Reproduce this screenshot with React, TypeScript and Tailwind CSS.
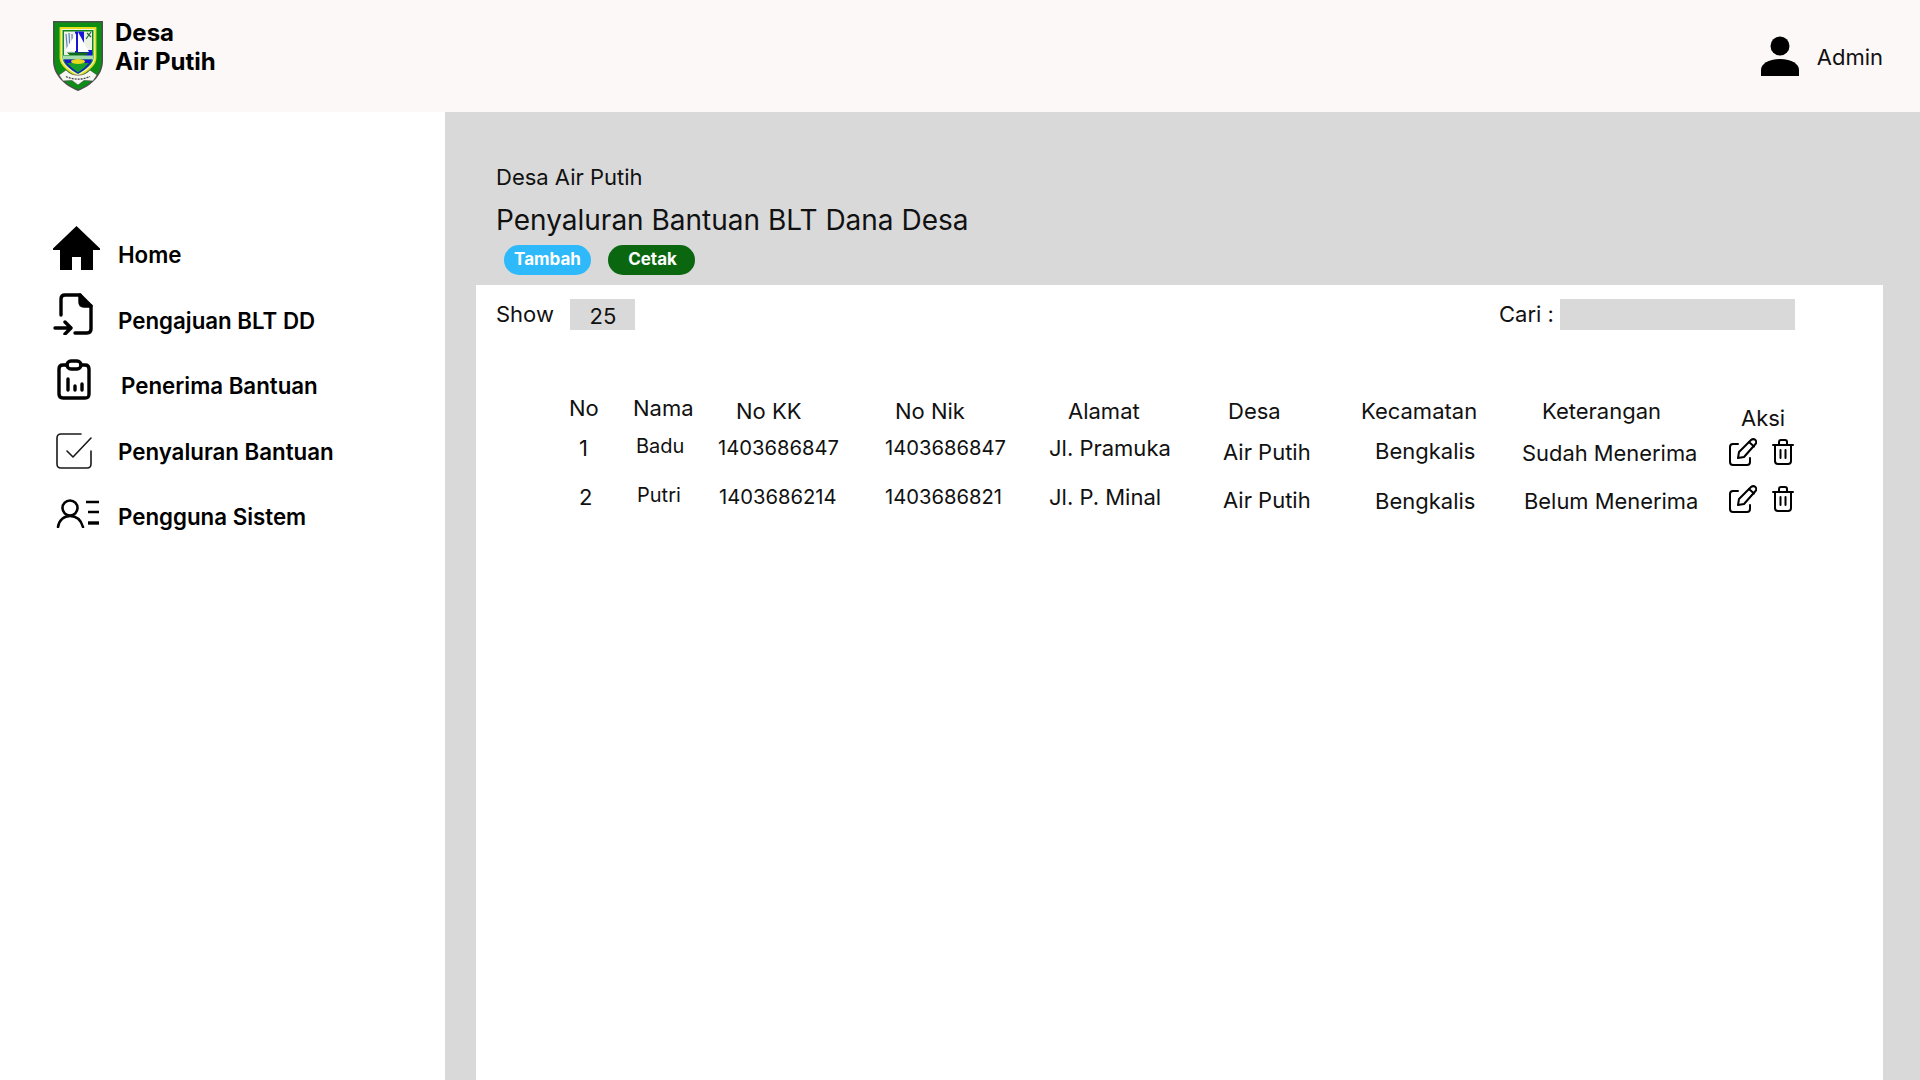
const Logo = () => (
  <svg width="50" height="70" viewBox="0 0 50 70" className="shrink-0">
    <path d="M0 0H50V40C50 54 38 65 25 70C12 65 0 54 0 40Z" fill="#4a4f4a" />
    <path d="M1.500 1.500H48.500V40C48.500 53 37 63.500 25 68.500C13 63.500 1.500 53 1.500 40Z" fill="#0a8f14" />
    <path d="M7.500 7H42.500V37C42.500 44 33 51 25 55.500C17 51 7.500 44 7.500 37Z" fill="#f3f6e6" stroke="#e6de1c" strokeWidth="1.800" />
    <path d="M9.500 9H40.500V37C40.500 43 32 49 25 53C18 49 9.500 43 9.500 37Z" fill="#0c8a18" />
    <path d="M11 10.500H39V34H11Z" fill="#eef2e4" />
    <path d="M22 10.500H31V34H22Z" fill="#1616d6" />
    <path d="M31 29H39V35H31Z" fill="#1616d6" />
    <path d="M13 13L14.500 30M16 12L17 30M19 13L19.500 28" stroke="#5f82c0" strokeWidth="1.200" />
    <path d="M34 12L38 16M38 11L33 18" stroke="#1f6b3a" strokeWidth="1.200" />
    <path d="M12 30L23 12V30Z" fill="#fff" />
    <path d="M25 11L36 31H25Z" fill="#fff" />
    <path d="M14 31.500H36L33 34.500H17Z" fill="#0f6a1c" />
    <path d="M10 34.500H40V38.500H10Z" fill="#a4dcae" />
    <path d="M11 38.500H39C38 43 32 49 25 52.500C18 49 12 43 11 38.500Z" fill="#1717d0" />
    <path d="M14 42H36L31 47L25 51.500L19 47Z" fill="#18a02a" />
    <ellipse cx="25" cy="40.500" rx="7" ry="2.500" fill="#e9d91e" />
    <path d="M6 54L13 49C19 56 31 56 37 49L44 54L40 60L31 59.500L25 64L19 59.500L10 60Z" fill="#f7f7f2" stroke="#444" strokeWidth="0.600" />
    <path d="M13 55.500C20 59 30 59 37 55.500" fill="none" stroke="#444" strokeWidth="1.300" strokeDasharray="2 1" />
  </svg>
);

const HomeIcon = () => (
  <svg width="47" height="44" viewBox="0 0 47 44">
    <path d="M23.500 0L47 22.500V24H40V44H28V31H19V44H7V24H0V22.500Z" fill="#000" />
  </svg>
);

const FileIcon = () => (
  <svg width="41" height="42" viewBox="0 0 41 42" fill="none" stroke="#000" strokeWidth="3.400" strokeLinecap="round" strokeLinejoin="round">
    <path d="M8 22V6C8 3 10 2 12 2H27L38 13V36C38 39 36 40 34 40H22" />
    <path d="M27 2V9C27 11 28 13 31 13H38" fill="#000" />
    <path d="M2 35H17M12 29L18 35L12 41" />
  </svg>
);

const ClipboardIcon = () => (
  <svg width="34" height="41" viewBox="0 0 34 41" fill="none" stroke="#000" strokeWidth="3.400" strokeLinecap="round">
    <path d="M10 6H6C3 6 2 8 2 10V35C2 38 4 39 6 39H28C31 39 32 38 32 35V10C32 8 31 6 28 6H24" />
    <rect x="10" y="2" width="14" height="8" rx="4" />
    <path d="M11 20V31M18 27V31M25 25V31" />
  </svg>
);

const CheckIcon = () => (
  <svg width="36" height="36" viewBox="0 0 36 36" fill="none" stroke="#1a1a1a" strokeWidth="1.600" strokeLinecap="round" strokeLinejoin="round">
    <path d="M25 1H5C2.500 1 1 2.500 1 5V31C1 33.500 2.500 35 5 35H31C33.500 35 35 33.500 35 31V18" />
    <path d="M11 18L17 24L35 5" />
  </svg>
);

const UserListIcon = () => (
  <svg width="44" height="29" viewBox="0 0 44 29" fill="none" stroke="#000" strokeWidth="2.600" strokeLinecap="round">
    <circle cx="14" cy="9" r="7.500" />
    <path d="M2 28C3 21 8 17 14 17C20 17 25 21 27 28" />
    <path d="M30 3H43M32 13H43" strokeLinecap="butt" />
    <path d="M32 24H43" strokeWidth="3.400" strokeLinecap="butt" />
  </svg>
);

const EditIcon = () => (
  <svg width="28" height="28" viewBox="0 0 28 28" fill="none" stroke="#000" strokeWidth="2" strokeLinecap="round" strokeLinejoin="round">
    <path d="M9 6H4C2 6 1 7.500 1 9V24C1 26 2 27 4 27H18C20 27 21 26 21 24V20" />
    <path d="M9 20L10 14L22 2C23.500 0.800 25 0.800 26.500 2C27.500 3.500 27.500 5 26.500 6L15 19Z" />
    <path d="M20 4L25 8.500" />
  </svg>
);

const TrashIcon = () => (
  <svg width="22" height="26" viewBox="0 0 22 26" fill="none" stroke="#000" strokeWidth="2" strokeLinecap="round" strokeLinejoin="round">
    <path d="M1 6H21" />
    <path d="M7 6V3C7 2 8 1 9 1H13C14 1 15 2 15 3V6" />
    <path d="M3 6V22C3 24 4 25 6 25H16C18 25 19 24 19 22V6" />
    <path d="M8.500 11V19M13.500 11V19" />
  </svg>
);

const menu = [
  { label: 'Home', icon: <div className="pb-[13px]"><HomeIcon /></div>, text: '' },
  { label: 'Pengajuan BLT DD', icon: <div className="pb-[12px]"><FileIcon /></div>, text: '' },
  { label: 'Penerima Bantuan', icon: <div className="pb-[12px] pl-1"><ClipboardIcon /></div>, text: 'pl-[3px]' },
  { label: 'Penyaluran Bantuan', icon: <div className="pl-[3px]"><CheckIcon /></div>, text: '' },
  { label: 'Pengguna Sistem', icon: <div className="pb-[6px] pl-[3px]"><UserListIcon /></div>, text: '' },
];

const Actions = () => (
  <div className="flex items-center gap-[15px]">
    <EditIcon />
    <TrashIcon />
  </div>
);

export default function App() {
  return (
    <div className="flex h-screen flex-col overflow-hidden bg-white text-[#111] font-['Inter',sans-serif]">
      <header className="flex h-[112px] shrink-0 items-center justify-between bg-[#fcf8f7] pl-[53px] pr-[37px]">
        <div className="flex items-center gap-3">
          <Logo />
          <div className="pb-[18px] text-[24px] font-bold leading-[29px] text-black">
            <div>Desa</div>
            <div>Air Putih</div>
          </div>
        </div>
        <div className="flex items-center gap-[18px]">
          <svg width="38" height="40" viewBox="0 0 38 40">
            <circle cx="19" cy="10" r="9.500" fill="#000" />
            <path d="M0 40V34C0 28 7 23 19 23C31 23 38 28 38 34V40Z" fill="#000" />
          </svg>
          <span className="pt-[2px] text-[22px]">Admin</span>
        </div>
      </header>

      <div className="flex min-h-0 flex-1">
        <aside className="w-[445px] shrink-0 pl-[53px] pt-[110px]">
          {menu.map((item) => (
            <div key={item.label} className="flex h-[65.500px] items-center">
              <div className="w-[65px]">{item.icon}</div>
              <span className={`text-[22.300px] font-semibold text-black ${item.text}`}>{item.label}</span>
            </div>
          ))}
        </aside>

        <main className="flex min-w-0 flex-1 flex-col bg-[#d9d9d9] pl-[31px] pr-[37px]">
          <div className="h-[173px] shrink-0 pl-[20px] pt-[49px]">
            <p className="text-[22px] leading-[32px]">Desa Air Putih</p>
            <h1 className="mt-[10px] text-[28px] font-normal leading-[34px]">Penyaluran Bantuan BLT Dana Desa</h1>
            <div className="mt-[8px] flex gap-[17px] pl-[8px]">
              <button className="h-[30px] w-[87px] rounded-full bg-[#2eb9fb] text-[17px] font-bold text-white">Tambah</button>
              <button className="h-[30px] w-[87px] rounded-full bg-[#0a670f] pl-[2px] text-[17px] font-bold text-white">Cetak</button>
            </div>
          </div>

          <section className="flex-1 bg-white">
            <div className="flex h-[45px] items-end justify-between pl-[20px] pr-[88px]">
              <div className="flex items-center">
                <span className="w-[74px] pt-[1px] text-[22px] leading-[31px]">Show</span>
                <span className="h-[31px] w-[65px] bg-[#d9d9d9] pl-[1px] pt-[2px] text-center text-[22px] leading-[31px]">25</span>
              </div>
              <div className="flex items-center">
                <span className="w-[61px] pt-[1px] text-[22px] leading-[31px]">Cari :</span>
                <span className="h-[31px] w-[235px] bg-[#d9d9d9]" />
              </div>
            </div>

            <div className="mt-[64px] ml-[93px] grid grid-cols-[64px_85px_167px_164px_174px_138px_162px_206px_66px] grid-rows-[38px_49px_49px] text-[22px] leading-[28px]">
              <div>No</div>
              <div>Nama</div>
              <div className="pl-[18px] pt-[3px]">No KK</div>
              <div className="pl-[10px] pt-[3px]">No Nik</div>
              <div className="pl-[19px] pt-[3px]">Alamat</div>
              <div className="pl-[5px] pt-[3px]">Desa</div>
              <div className="pt-[3px]">Kecamatan</div>
              <div className="pl-[19px] pt-[3px]">Keterangan</div>
              <div className="pl-[12px] pt-[10px]">Aksi</div>

              <div className="pl-[10px] pt-[2px]">1</div>
              <div className="pl-[3px] text-[20px]">Badu</div>
              <div className="pt-[2px] text-[20.200px]">1403686847</div>
              <div className="pt-[2px] text-[20.200px]">1403686847</div>
              <div className="pt-[2px]">Jl. Pramuka</div>
              <div className="pt-[6px]">Air Putih</div>
              <div className="pl-[14px] pt-[5px]">Bengkalis</div>
              <div className="pt-[7px] text-[21.900px] -ml-[1px]">Sudah Menerima</div>
              <div className="pt-[6px]"><Actions /></div>

              <div className="pl-[10px] pt-[2px]">2</div>
              <div className="pl-[4px] text-[20px]">Putri</div>
              <div className="pl-[1px] pt-[2px] text-[20.200px]">1403686214</div>
              <div className="pt-[2px] text-[20.200px]">1403686821</div>
              <div className="pt-[2px]">Jl. P. Minal</div>
              <div className="pt-[5px]">Air Putih</div>
              <div className="pl-[14px] pt-[6px]">Bengkalis</div>
              <div className="pl-[1px] pt-[6px] text-[21.900px]">Belum Menerima</div>
              <div className="pt-[4px]"><Actions /></div>
            </div>
          </section>
        </main>
      </div>
    </div>
  );
}
